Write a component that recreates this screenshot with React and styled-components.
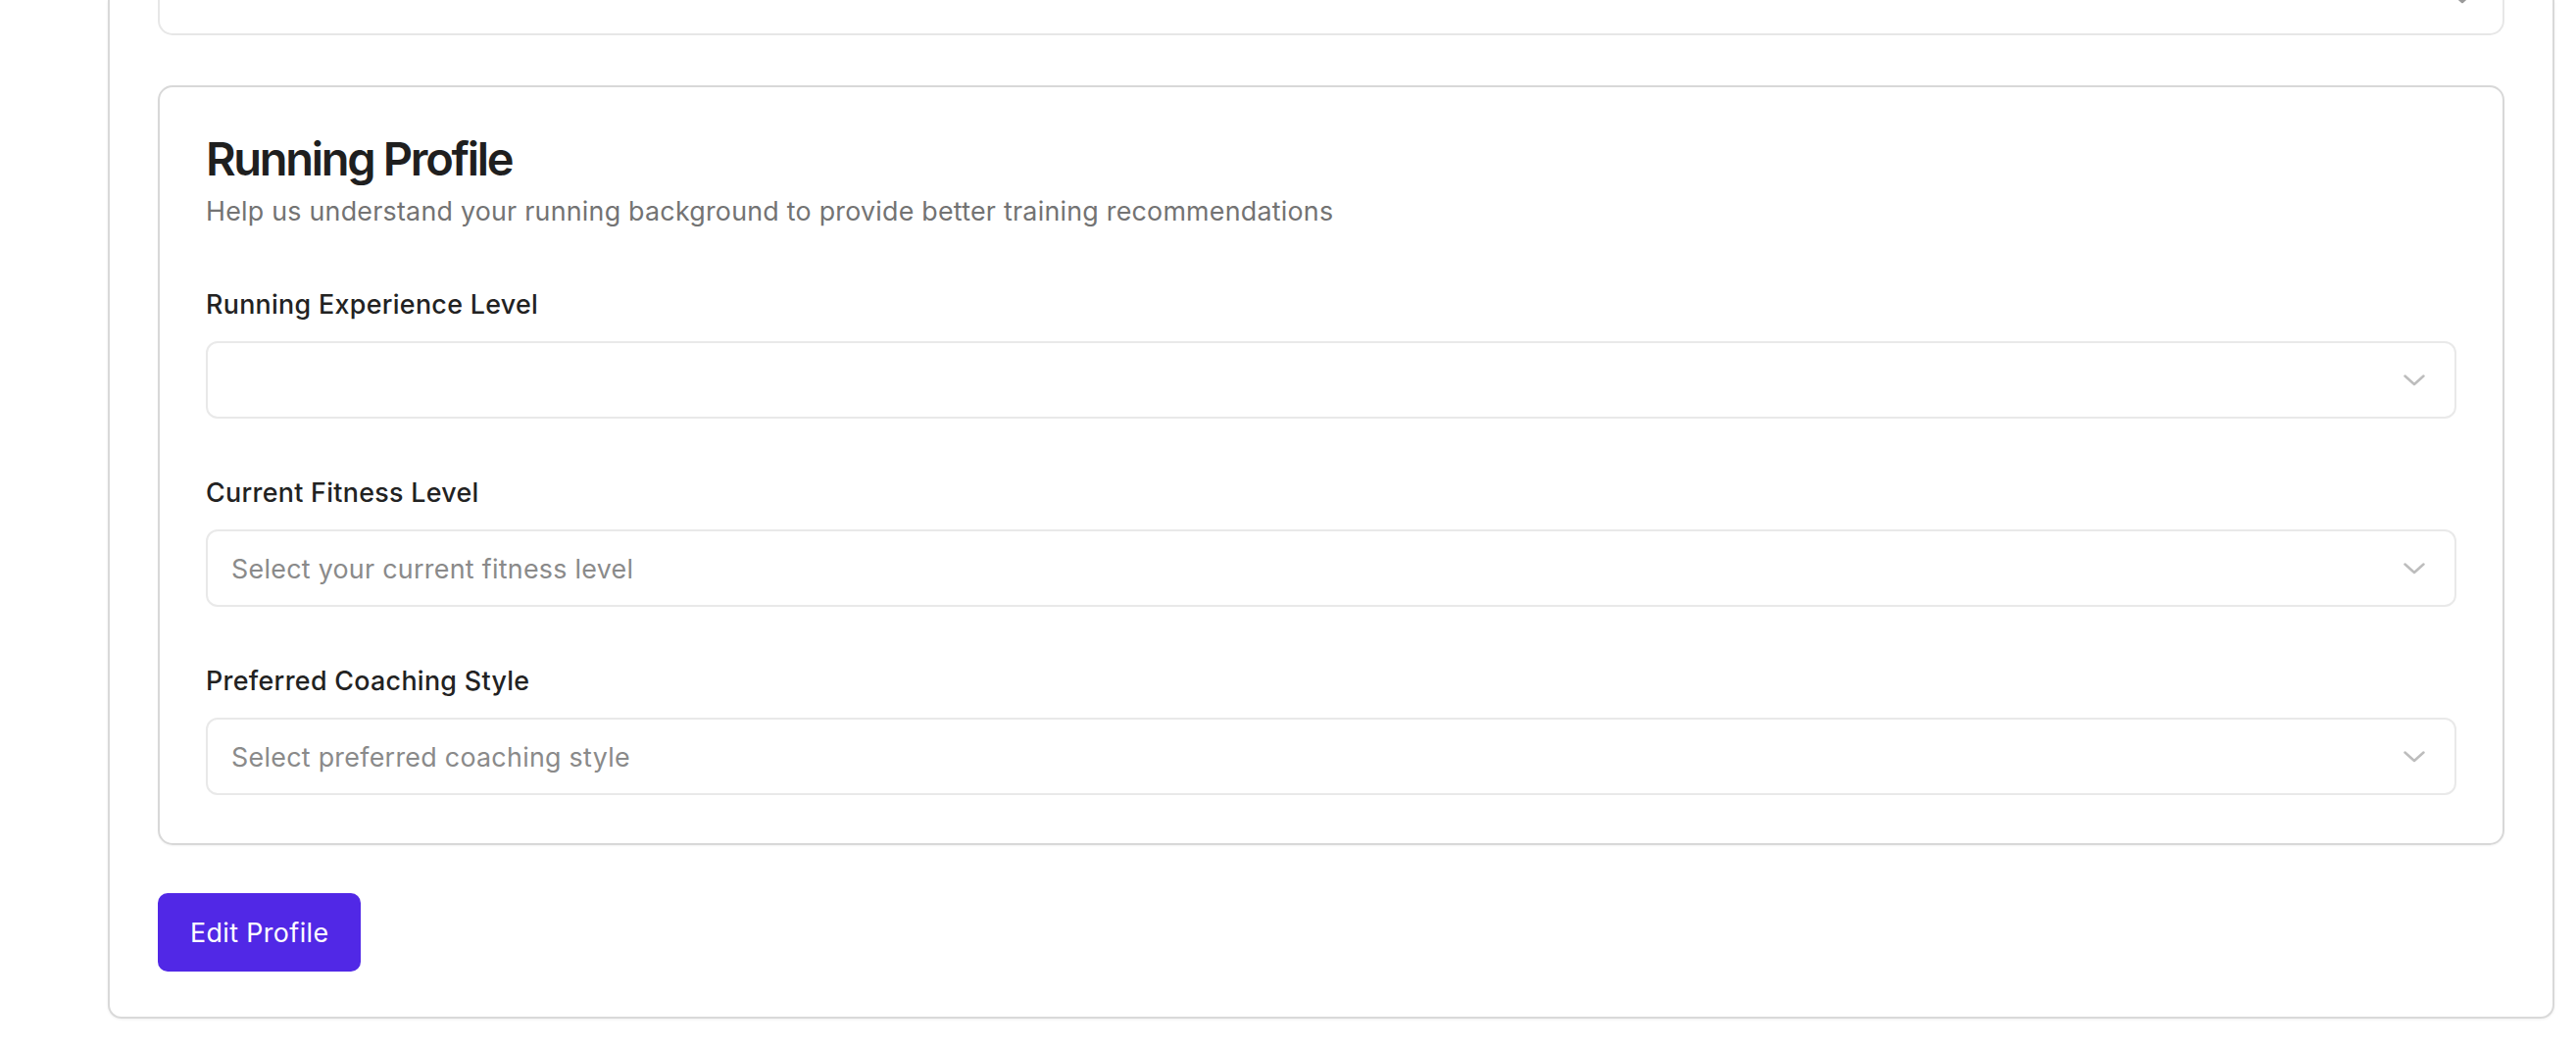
import React from "react";
import styled, { createGlobalStyle } from "styled-components";

const GlobalStyle = createGlobalStyle`
  html, body {
    margin: 0;
    padding: 0;
    background: #ffffff;
    font-family: Inter, "Noto Sans", "Liberation Sans", sans-serif;
    -webkit-font-smoothing: antialiased;
  }
  * { box-sizing: border-box; }
`;

const Page = styled.div`
  width: 2628px;
  height: 1070px;
  overflow: hidden;
  background: #ffffff;
`;

const OuterCard = styled.section`
  margin-left: 110px;
  width: 2496px;
  background: #ffffff;
  border: 2px solid #d9d9d9;
  border-top: none;
  border-radius: 0 0 14px 14px;
  box-shadow: 0 1px 3px rgba(0, 0, 0, 0.06);
  padding: 0 49px 46px 49px;
  display: flex;
  flex-direction: column;
`;

const PrevBlock = styled.div`
  position: relative;
  height: 36px;
  border: 2px solid #e7e7e7;
  border-top: none;
  border-radius: 0 0 15px 15px;
`;

const PrevChevron = styled.svg`
  position: absolute;
  right: 30px;
  top: -8px;
`;

const Card = styled.div`
  margin-top: 51px;
  border: 2px solid #d8d8d8;
  border-radius: 15px;
  box-shadow: 0 1px 2px rgba(0, 0, 0, 0.05);
  padding: 45px 47px 49px 47px;
  display: flex;
  flex-direction: column;
`;

const Title = styled.h2`
  margin: 0;
  font-size: 47px;
  line-height: 56px;
  font-weight: 600;
  letter-spacing: -2.3px;
  color: #1f1f1f;
`;

const Subtitle = styled.p`
  margin: 5px 0 0 0;
  font-size: 26.8px;
  line-height: 40px;
  letter-spacing: 0.25px;
  color: #737373;
`;

const Fields = styled.div`
  margin-top: 55px;
  display: flex;
  flex-direction: column;
  gap: 55px;
`;

const Field = styled.div`
  display: flex;
  flex-direction: column;
  gap: 18px;
`;

const Label = styled.label`
  font-size: 26.8px;
  line-height: 40px;
  font-weight: 500;
  letter-spacing: 0.33px;
  color: #222222;
`;

const SelectBox = styled.div`
  height: 79px;
  border: 2px solid #e9e9e9;
  border-radius: 12px;
  background: #ffffff;
  display: flex;
  align-items: center;
  justify-content: space-between;
  padding: 0 30px 0 24px;
`;

const Placeholder = styled.span`
  font-size: 26.8px;
  letter-spacing: 0.3px;
  color: #8a8a8a;
`;

const Chevron = ({ color = "#bdbdbd" }) => (
  <svg width="22" height="12" viewBox="0 0 22 12" fill="none">
    <polyline
      points="1.5,1.5 11,10 20.5,1.5"
      stroke={color}
      strokeWidth="2.5"
      strokeLinecap="round"
      strokeLinejoin="round"
    />
  </svg>
);

const Actions = styled.div`
  margin-top: 49px;
  display: flex;
`;

const PrimaryButton = styled.button`
  height: 80px;
  padding: 0 33px;
  border: none;
  border-radius: 10px;
  background: #5128e6;
  color: #ffffff;
  font-family: Inter, "Noto Sans", "Liberation Sans", sans-serif;
  font-size: 26.8px;
  font-weight: 400;
  letter-spacing: 0.4px;
  cursor: pointer;
`;

const fields = [
  { label: "Running Experience Level", placeholder: "" },
  { label: "Current Fitness Level", placeholder: "Select your current fitness level" },
  { label: "Preferred Coaching Style", placeholder: "Select preferred coaching style" },
];

export default function App() {
  return (
    <Page>
      <GlobalStyle />
      <OuterCard>
        <PrevBlock>
          <PrevChevron width="22" height="12" viewBox="0 0 22 12" fill="none">
            <polyline
              points="1.5,1.5 11,10 20.5,1.5"
              stroke="#9a9a9a"
              strokeWidth="2.5"
              strokeLinecap="round"
              strokeLinejoin="round"
            />
          </PrevChevron>
        </PrevBlock>
        <Card>
          <Title>Running Profile</Title>
          <Subtitle>
            Help us understand your running background to provide better training recommendations
          </Subtitle>
          <Fields>
            {fields.map((f) => (
              <Field key={f.label}>
                <Label>{f.label}</Label>
                <SelectBox>
                  <Placeholder>{f.placeholder}</Placeholder>
                  <Chevron />
                </SelectBox>
              </Field>
            ))}
          </Fields>
        </Card>
        <Actions>
          <PrimaryButton>Edit Profile</PrimaryButton>
        </Actions>
      </OuterCard>
    </Page>
  );
}
